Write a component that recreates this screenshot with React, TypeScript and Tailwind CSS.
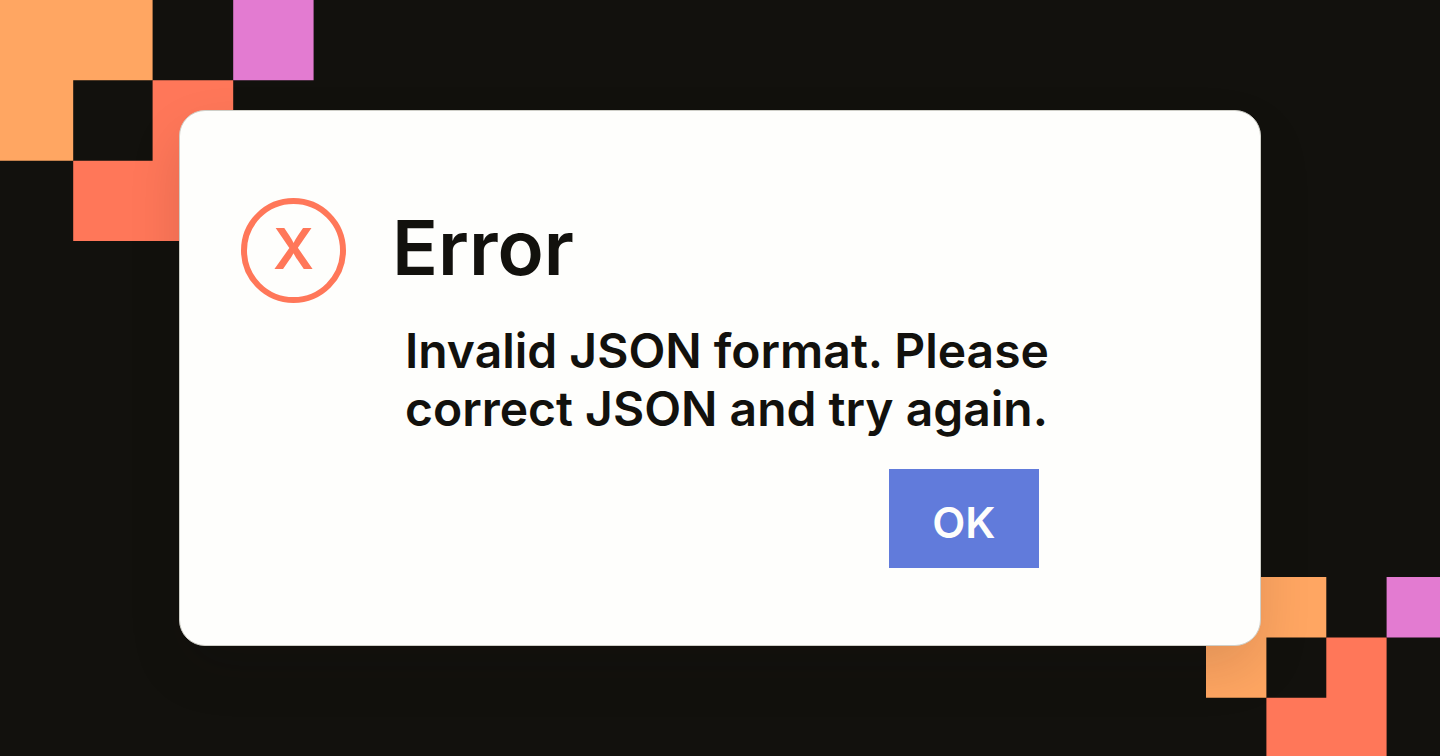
function TopLeftBlocks() {
  return (
    <svg className="absolute left-0 top-0" width="314" height="242" viewBox="0 0 314 242" aria-hidden="true">
      <path fill="#ffa662" d="M0 0H152.6V80.3H73.2V160.7H0Z" />
      <path fill="#ff7759" d="M152.6 80.3H233.2V241H73.2V160.7H152.6Z" />
      <path fill="#e37bd1" d="M233.2 0H313.6V80.3H233.2Z" />
    </svg>
  );
}

function BottomRightBlocks() {
  return (
    <svg className="absolute bottom-0 right-0" width="234" height="179" viewBox="0 0 234 179" aria-hidden="true">
      <path fill="#ffa662" d="M0 0H120.3V60.6H60.4V120.8H0Z" />
      <path fill="#ff7759" d="M120.3 60.6H180.6V179H60.4V120.8H120.3Z" />
      <path fill="#e37bd1" d="M180.6 0H234V60.6H180.6Z" />
    </svg>
  );
}

function ErrorBadge() {
  return (
    <span
      aria-hidden="true"
      className="flex size-[105px] shrink-0 items-center justify-center rounded-full border-6 border-[#ff7759] pb-1 text-[57px] leading-none font-semibold text-[#ff7759]"
    >
      X
    </span>
  );
}

export default function App() {
  return (
    <main className="relative flex min-h-screen items-center justify-center overflow-hidden bg-[#12110d] p-6 font-['Inter',sans-serif] text-[#12110d]">
      <TopLeftBlocks />
      <BottomRightBlocks />
      <section
        role="alertdialog"
        aria-labelledby="dialog-title"
        aria-describedby="dialog-message"
        className="relative w-full max-w-[1082px] rounded-[26px] border border-[#cfcfc8] bg-[#fefefc] px-[61px] pt-[87px] pb-[77px] shadow-[0_24px_56px_-4px_rgba(18,17,13,0.14)]"
      >
        <header className="flex items-center gap-[46px]">
          <ErrorBadge />
          <h1 id="dialog-title" className="pb-2 text-[76px] leading-none font-semibold">
            Error
          </h1>
        </header>
        <div className="mt-[19px] ml-[164px] w-fit">
          <p id="dialog-message" className="text-[48px] leading-[58px] font-semibold">
            Invalid JSON format. Please
            <br />
            correct JSON and try again.
          </p>
          <div className="mt-[31px] flex justify-end pr-[10px]">
            <button
              type="button"
              className="h-[99px] w-[150px] bg-[#617bdb] pt-2 text-[43px] leading-none font-semibold text-[#fefefc]"
            >
              OK
            </button>
          </div>
        </div>
      </section>
    </main>
  );
}
